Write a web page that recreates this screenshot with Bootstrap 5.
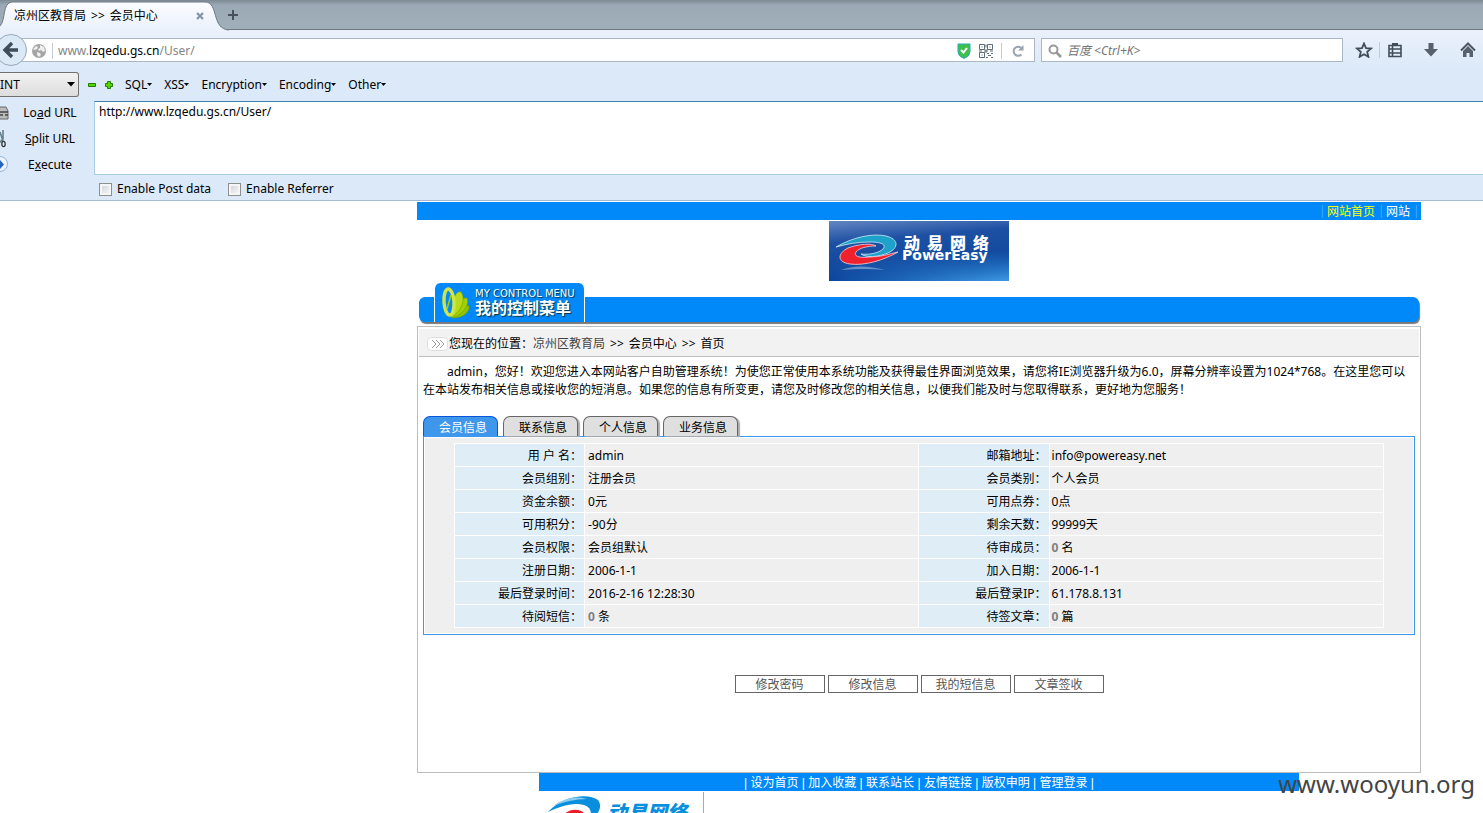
<!DOCTYPE html>
<html lang="zh-CN">
<head>
<meta charset="utf-8">
<meta name="viewport" content="width=device-width, initial-scale=1">
<title>凉州区教育局 &gt;&gt; 会员中心</title>
<link href="https://cdn.jsdelivr.net/npm/bootstrap@5.3.0/dist/css/bootstrap.min.css" rel="stylesheet">
<style>
body{font:12px/18px "Noto Sans","Noto Sans CJK SC",sans-serif;color:#000;background:#fff;height:100vh;overflow:hidden;position:relative}
a{color:inherit;text-decoration:none}
button{background:none;border:0;padding:0;color:inherit}
svg{display:block;flex:none}
/* browser chrome */
.tabstrip{height:30px;background:linear-gradient(#7d8993 0,#9aa9b5 5px,#a1afba 29px);border-bottom:1px solid #6d7a86}
.tab-on{height:30px;width:220px;position:relative;padding:2px 0 0 14px}
.tab-shape{position:absolute;left:0;top:0}
.tab-on span,.tab-on button{position:relative}
.tab-on span{width:180px}
.tab-on i,.crumbs i{font-style:normal;margin:0 5px}
.navbar-row{height:42px;background:linear-gradient(#eaf1fb,#dbe9f8);padding:8px 7px 0 0}
.back{margin:-4px 0 0 -5px;position:relative;z-index:1}
.addr,.search{height:24px;background:#fff;border:1px solid #a9b7c6}
.addr{margin-left:-13px;padding:1px 0 0 17px}
.addr-text{color:#868686}
.addr-text b{font-weight:400;color:#000}
.vline{width:1px;height:16px;background:#c5ccd4}
.addr .globe-line{margin:0 5px 0 6px}
.search{width:302px;margin-left:6px;padding:1px 0 0 6px}
.search input{border:0;outline:0;padding:0 0 0 5px;font-style:italic;background:none;width:100%}
.search input::placeholder{color:#757575;opacity:1}
.tools{padding:4px 0 0 12px}
.tools a+a{margin-left:22px}
.tools .vline{margin:0 8px 0 6px}
.hackbar{background:#dbe9f8;border-bottom:1px solid #a5b9d2;height:129px}
.hack-menu{height:25px}
.pick{width:79px;height:25px;position:relative}
.pick select{appearance:none;width:100%;height:100%;border:1px solid #707070;border-left:0;border-radius:0 3px 3px 0;background:linear-gradient(#f2f2f2,#ddd);padding:0;color:#000}
.pick svg{position:absolute;right:4px;top:10px;pointer-events:none}
.plus-minus{gap:9px;margin:0 12px 0 9px}
.gap-menu{gap:12px}
.side{width:94px;padding-top:3px}
.side button{height:26px;display:flex;align-items:center;width:100%}
.side button svg{width:20px}
.side button span{width:60px;text-align:center}
.url-box{width:100%;height:74px;border:1px solid #abcde4;border-top-color:#3c7fb1;border-right:0;padding:1px 4px;resize:none;display:block;outline:0}
.tick{appearance:none;width:13px;height:13px;border:1px solid #8e8f8f;background:linear-gradient(135deg,#ccd0d5,#fafafa);box-shadow:inset 0 0 0 2px #f6f6f6;margin:0 5px 0 0}
.opts{padding:5px 0 0 5px;gap:17px}
/* site */
.site{padding:1px 62px 0 417px}
.blue{background:#0189f9;color:#fff;height:18px;line-height:20px}
.top-links{gap:3px;padding-right:3px}
.top-links i{font-style:normal;color:#3bb3ff;width:5px;text-align:center;line-height:17px}
.brand{margin-top:1px}
.menu-bar{height:42px;margin:2px 0 1px 2px;position:relative}
.menu-bar::before{content:"";display:block;position:absolute;left:0;right:2px;top:14px;height:25px;background:#0189f9;border-radius:6px;box-shadow:1px 2px 1px #777}
.menu-tab{position:absolute;left:15px;top:0;width:151px;height:39px;background:#0189f9;border:1px solid #fff;border-width:0 1px;border-radius:6px 6px 0 0;color:#fff;text-shadow:1px 1px 1px #034;padding-left:6px}
.menu-en{font:10px/10px "DejaVu Sans",sans-serif}
.menu-cn{font-size:16px;line-height:18px;font-weight:700}
.frame{border:1px solid #bdbdbd;height:447px}
.crumbs{height:28px;margin:2px 1px 0;background:#f2f2f2;border-bottom:1px solid #bdbdbd;padding:2px 0 0 8px}
.crumbs svg{margin-right:1px}
.grey{color:#444}
.hello{margin:6px 5px 17px;text-indent:24px}
.info-tabs{gap:5px;margin-left:5px}
.info-tabs button{width:75px;height:20px;border:1px solid #666;border-bottom:0;border-radius:7px 7px 0 0;background:#dfdfdf;padding:2px 0 0 5px;box-shadow:2px 1px 1px #aaa}
.info-tabs .on{background:#3e97eb;color:#fff;border-color:#0b55d8;box-shadow:none}
.panel-box{margin:0 5px;border:1px solid #3e97eb;background:#efefef;box-shadow:inset 0 0 0 1px #fff;padding:6px 30px}
.facts{width:100%;table-layout:fixed}
.facts th,.facts td{border:1px solid #fff;height:23px;padding:1px 2px 0;font-weight:400}
.facts th{background:#dfeef6;text-align:right}
.facts td:nth-child(2){padding-left:3px}
.facts b{color:#808080}
.acts{gap:3px;margin-top:40px}
.acts button{width:90px;height:18px;border:1px solid #666;color:#555;line-height:18px;background:#fff}
.foot{max-width:760px}
.foot-links{font-family:"Liberation Sans","Noto Sans CJK SC",sans-serif}
.foot-logo{width:165px;height:60px;border-right:1px solid #7ab5e6;margin-top:1px}
.site-url{position:absolute;right:8px;top:767px;font-size:24px;line-height:34px;color:#444}
</style>
</head>
<body>
<header>
  <div class="tabstrip d-flex align-items-center">
    <div class="tab-on d-flex align-items-center">
      <svg class="tab-shape" width="236" height="31" viewBox="0 0 236 31"><defs><linearGradient id="tg" x2="0" y2="1"><stop stop-color="#fbfcff"/><stop offset="1" stop-color="#eaf1fb"/></linearGradient></defs><path d="M0 26C6 20 2 3 12 2H205C219 2 211 29 229 30V31H0Z" fill="url(#tg)"/><path d="M0 26C6 20 2 3 12 2H205C219 2 211 29 229 30" fill="none" stroke="#6d7a86"/></svg>
      <span>凉州区教育局<i>&gt;&gt;</i>会员中心</span>
      <button aria-label="关闭标签页"><svg width="12" height="12" viewBox="0 0 12 12"><path d="M3 3l6 6M9 3l-6 6" stroke="#8996a5" stroke-width="2.4"/></svg></button>
    </div>
    <button class="ms-2" aria-label="新标签页"><svg width="12" height="12" viewBox="0 0 12 12"><path d="M5 1v10M0 6h10" stroke="#46515d" stroke-width="2"/></svg></button>
  </div>
  <nav class="navbar-row d-flex align-items-start">
    <button class="back" aria-label="后退"><svg width="32" height="32" viewBox="0 0 32 32"><circle cx="16" cy="16" r="15.5" fill="#dbe8f6" stroke="#97a9bb"/><path d="M17 9l-7 7 7 7M11 16h12" fill="none" stroke="#3f4c59" stroke-width="3.4"/></svg></button>
    <div class="addr d-flex align-items-center flex-grow-1">
      <svg width="14" height="14" viewBox="0 0 14 14"><circle cx="7" cy="7" r="7" fill="#a5a5a5"/><path d="M1 5l3-3 2 1-1 2-2 1zM8 1l4 2 1 4-2 1-2-2-2 1-1-2 2-1zM5 8l3 1 1 2-2 2-2-2z" fill="#eee"/></svg>
      <i class="vline globe-line"></i>
      <span class="addr-text flex-grow-1">www.<b>lzqedu.gs.cn</b>/User/</span>
      <svg width="14" height="16" viewBox="0 0 14 16"><path d="M1 1h12v8q0 4-6 6.500Q1 13 1 9Z" fill="#3ec04b" stroke="#29a8ba"/><path d="M4 7l2.500 2.500L10 5" fill="none" stroke="#fff" stroke-width="2"/></svg>
      <svg class="ms-2" width="14" height="14" viewBox="0 0 14 14" fill="none" stroke="#5f6b77"><path d="M.5.5h5v5h-5zM8.500.5h5v5h-5zM.5 8.500h5v5h-5zM2.500 3h1M10.500 3h1M2.500 11h1M7 .5v3M7 5v4M0 7h3M5 7h4M11 7h3M8 9.500h2M12 9.500h2M9 11.500h3M7 13.500h2M12 13.500h2"/></svg>
      <i class="vline ms-2"></i>
      <button class="ms-2 me-2" aria-label="刷新"><svg width="16" height="14" viewBox="0 0 16 14"><path d="M11.500 10.500A4.600 4.600 0 1 1 11.500 4" fill="none" stroke="#99a4b0" stroke-width="2"/><path d="M13.500 1v5.500H8Z" fill="#99a4b0"/></svg></button>
    </div>
    <div class="search d-flex align-items-center">
      <svg width="14" height="14" viewBox="0 0 14 14"><circle cx="5.500" cy="5.500" r="4" fill="none" stroke="#999" stroke-width="2"/><path d="M8.500 8.500l4.500 4.500" stroke="#999" stroke-width="2.600"/></svg>
      <input type="text" aria-label="搜索" placeholder="百度 &lt;Ctrl+K&gt;">
    </div>
    <div class="tools d-flex align-items-center">
      <a href="#" aria-label="书签"><svg width="18" height="16" viewBox="0 0 18 16"><path d="M9 1.500l2 4.700 5 .4-3.800 3.300 1.200 4.900L9 12.200l-4.400 2.600 1.200-4.900L2 6.600l5-.4z" fill="none" stroke="#414d59" stroke-width="1.800"/></svg></a>
      <i class="vline"></i>
      <a href="#" aria-label="书签列表"><svg width="14" height="16" viewBox="0 0 14 16"><path d="M1 3.500h12v11H1zM1 7h12M1 11h12M4.500 4v10" fill="none" stroke="#414d59" stroke-width="1.600"/><path d="M4 1h6v3H4z" fill="#414d59"/></svg></a>
      <a href="#" aria-label="下载"><svg width="14" height="16" viewBox="0 0 14 16"><path d="M4.500 1h5v6H14l-7 7.500L0 7h4.500z" fill="#56616d"/></svg></a>
      <a href="#" aria-label="主页"><svg width="16" height="16" viewBox="0 0 16 16"><path d="M1 8.500l7-7 7 7" fill="none" stroke="#4c5763" stroke-width="2"/><path d="M3 9l5-5 5 5v6H9.500v-4h-3v4H3z" fill="#56616d"/></svg></a>
    </div>
  </nav>
  <section class="hackbar">
    <div class="hack-menu d-flex align-items-center">
      <div class="pick"><select aria-label="注入类型"><option>INT</option></select><svg width="8" height="5" viewBox="0 0 8 5"><path d="M0 0h8L4 4.500z"/></svg></div>
      <div class="plus-minus d-flex">
        <button aria-label="减"><svg width="8" height="8" viewBox="0 0 8 8"><path d="M.5 2.500h7v3h-7z" fill="#53d800" stroke="#247c00"/></svg></button>
        <button aria-label="加"><svg width="8" height="8" viewBox="0 0 8 8"><path d="M2.500.5h3v2h2v3h-2v2h-3v-2h-2v-3h2z" fill="#53d800" stroke="#247c00"/></svg></button>
      </div>
      <div class="d-flex gap-menu" id="hackMenus"></div>
    </div>
    <div class="d-flex">
      <div class="side">
        <button><svg height="18" viewBox="0 0 20 18"><path d="M-4 3H6l2 4v8H-4z" fill="#bbb" stroke="#666"/><path d="M-3 8h11M0 11h3M5 11h3" stroke="#444" stroke-width="1.600"/></svg><span>Lo<u>a</u>d URL</span></button>
        <button><svg height="18" viewBox="0 0 20 18"><path d="M3 0v9l-4 4M0 2l3 9" fill="none" stroke="#66808c" stroke-width="1.600"/><ellipse cx="3.500" cy="14" rx="1.700" ry="2.600" fill="none" stroke="#333" stroke-width="1.300"/></svg><span><u>S</u>plit URL</span></button>
        <button><svg height="18" viewBox="0 0 20 18"><circle cx="0" cy="8" r="7.500" fill="#edf4ff" stroke="#8fb3e2"/><path d="M-2 7h2V4l4 4.500L0 13v-3h-2z" fill="#2765c0"/></svg><span>E<u>x</u>ecute</span></button>
      </div>
      <div class="flex-grow-1 pt-1">
        <textarea class="url-box" aria-label="URL" spellcheck="false">http://www.lzqedu.gs.cn/User/</textarea>
        <div class="opts d-flex">
          <label class="d-flex align-items-center"><input class="tick" type="checkbox">Enable Post data</label>
          <label class="d-flex align-items-center"><input class="tick" type="checkbox">Enable Referrer</label>
        </div>
      </div>
    </div>
  </section>
</header>
<main class="site">
  <div class="blue top-links d-flex justify-content-end"><i>|</i><a href="#" style="color:#ff0">网站首页</a><i>|</i><a href="#">网站</a><i>|</i></div>
  <svg class="brand mx-auto" width="180" height="60" viewBox="0 0 180 60">
    <defs><linearGradient id="bg" x1="0" y1="0" x2=".25" y2="1"><stop stop-color="#6386c2"/><stop offset=".35" stop-color="#1d50a3"/><stop offset="1" stop-color="#0b469c"/></linearGradient><linearGradient id="bg2" x2="0" y2="1"><stop offset=".5" stop-color="#39e" stop-opacity="0"/><stop offset="1" stop-color="#4bb0f4" stop-opacity=".8"/></linearGradient><linearGradient id="bg3"><stop stop-color="#fff" stop-opacity="0"/><stop offset="1" stop-color="#fff"/></linearGradient><mask id="fade"><path d="M0 0h180v60H0z" fill="url(#bg3)"/></mask></defs>
    <path d="M0 0h180v60H0z" fill="url(#bg)"/><path d="M0 0h180v60H0z" fill="url(#bg2)" mask="url(#fade)"/>
    <path d="M12 49q18-7 44 0-20-2-44 0z" fill="#b8d0ee" opacity=".5"/>
    <path d="M7 26C24 16 44 12 57 15c13 3 13 12 2 17-10 4-22 5-27 1 8 1 18-1 22-5 4-5-3-7-13-7-13 0-23 2-34 5Z" fill="#1fa2c9" stroke="#cfeaf8" stroke-width=".8"/>
    <path d="M69 31C55 39 36 45 21 43 7 41 9 32 19 27c10-4 24-5 28-2-9 0-17 2-20 6-3 5 5 6 14 5 11 0 19-3 28-5Z" fill="#f0202c" stroke="#f6d5dc" stroke-width=".8"/>
    <g fill="#fff" font-family="'Noto Sans CJK SC',sans-serif" font-size="16" font-weight="900"><text x="75 98 121 144" y="28">动易网络</text></g>
    <text x="73" y="39" fill="#fff" font-family="'DejaVu Sans',sans-serif" font-size="14" font-weight="700">PowerEasy</text>
  </svg>
  <div class="menu-bar">
    <div class="menu-tab d-flex align-items-center">
      <svg width="30" height="36" viewBox="0 0 30 36"><g stroke="#6f9b00" stroke-width=".6"><path d="M12 33C17 24 23 19 28 21c1 6-6 12-16 12Z" fill="#8fc400"/><path d="M11 33C14 20 20 12 26 13c3 6-4 17-15 20Z" fill="#a5d000"/><path d="M10 33C11 16 14 5 20 7c5 6 1 19-10 26Z" fill="#b6dc1c"/></g><ellipse cx="8" cy="17" rx="5" ry="13" transform="rotate(-4 8 17)" fill="#0189f9" stroke="#cfe548" stroke-width="3.400"/><path d="M10 10L6 24" stroke="#a5d000" stroke-width="1.500"/></svg>
      <div class="ps-1"><div class="menu-en">MY CONTROL MENU</div><div class="menu-cn">我的控制菜单</div></div>
    </div>
  </div>
  <div class="frame">
    <div class="crumbs d-flex align-items-center">
      <svg width="21" height="16" viewBox="0 0 21 16"><rect x=".5" y="1.500" width="20" height="13" rx="4" fill="#fff" stroke="#ddd"/><path d="M5 4l4 4-4 4M9 4l4 4-4 4M13 4l4 4-4 4" fill="none" stroke="#999"/></svg>
      <span>您现在的位置：</span><a href="#" class="grey">凉州区教育局</a><i>&gt;&gt;</i><a href="#">会员中心</a><i>&gt;&gt;</i><span>首页</span>
    </div>
    <p class="hello">admin，您好！欢迎您进入本网站客户自助管理系统！为使您正常使用本系统功能及获得最佳界面浏览效果，请您将IE浏览器升级为6.0，屏幕分辨率设置为1024*768。在这里您可以在本站发布相关信息或接收您的短消息。如果您的信息有所变更，请您及时修改您的相关信息，以便我们能及时与您取得联系，更好地为您服务！</p>
    <div class="info-tabs d-flex"><button class="on">会员信息</button><button>联系信息</button><button>个人信息</button><button>业务信息</button></div>
    <div class="panel-box">
      <table class="facts">
        <colgroup><col style="width:14%"><col style="width:36%"><col style="width:14%"><col style="width:36%"></colgroup>
        <tbody>
        <tr><th scope="row">用 户 名：</th><td>admin</td><th scope="row">邮箱地址：</th><td>info@powereasy.net</td></tr>
        <tr><th scope="row">会员组别：</th><td>注册会员</td><th scope="row">会员类别：</th><td>个人会员</td></tr>
        <tr><th scope="row">资金余额：</th><td>0元</td><th scope="row">可用点券：</th><td>0点</td></tr>
        <tr><th scope="row">可用积分：</th><td>-90分</td><th scope="row">剩余天数：</th><td>99999天</td></tr>
        <tr><th scope="row">会员权限：</th><td>会员组默认</td><th scope="row">待审成员：</th><td><b>0</b> 名</td></tr>
        <tr><th scope="row">注册日期：</th><td>2006-1-1</td><th scope="row">加入日期：</th><td>2006-1-1</td></tr>
        <tr><th scope="row">最后登录时间：</th><td>2016-2-16 12:28:30</td><th scope="row">最后登录IP：</th><td>61.178.8.131</td></tr>
        <tr><th scope="row">待阅短信：</th><td><b>0</b> 条</td><th scope="row">待签文章：</th><td><b>0</b> 篇</td></tr>
        </tbody>
      </table>
    </div>
    <div class="acts d-flex justify-content-center"><button>修改密码</button><button>修改信息</button><button>我的短信息</button><button>文章签收</button></div>
  </div>
  <footer class="foot mx-auto">
    <div class="blue foot-links text-center">| <a href="#">设为首页</a> | <a href="#">加入收藏</a> | <a href="#">联系站长</a> | <a href="#">友情链接</a> | <a href="#">版权申明</a> | <a href="#">管理登录</a> |</div>
    <div class="foot-logo">
      <svg width="164" height="60" viewBox="0 0 164 60"><path d="M9 20C24 3 50 1 59 8c6 8-2 17-9 20 3-7 3-12-5-15C33 10 20 15 9 20Z" fill="#078fdd"/><path d="M14 14C26 5 40 4 48 7 36 7 25 10 14 14Z" fill="#8bcdf2"/><path d="M22 26c4-7 14-11 22-6 3 9-10 15-22 6Z" fill="#ee1c25"/><text x="68" y="28" fill="#078fdd" font-family="'Noto Sans CJK SC',sans-serif" font-size="20" font-weight="900" font-style="italic">动易网络</text></svg>
    </div>
  </footer>
</main>
<div class="site-url">www.wooyun.org</div>
<script src="https://cdn.jsdelivr.net/npm/bootstrap@5.3.0/dist/js/bootstrap.bundle.min.js"></script>
<script>
document.getElementById('hackMenus').innerHTML=['SQL','XSS','Encryption','Encoding','Other'].map(t=>`<button class="d-flex align-items-center">${t}<svg width="5" height="3" viewBox="0 0 5 3"><path d="M0 0h5L2.500 3z"/></svg></button>`).join('');
</script>
</body>
</html>
